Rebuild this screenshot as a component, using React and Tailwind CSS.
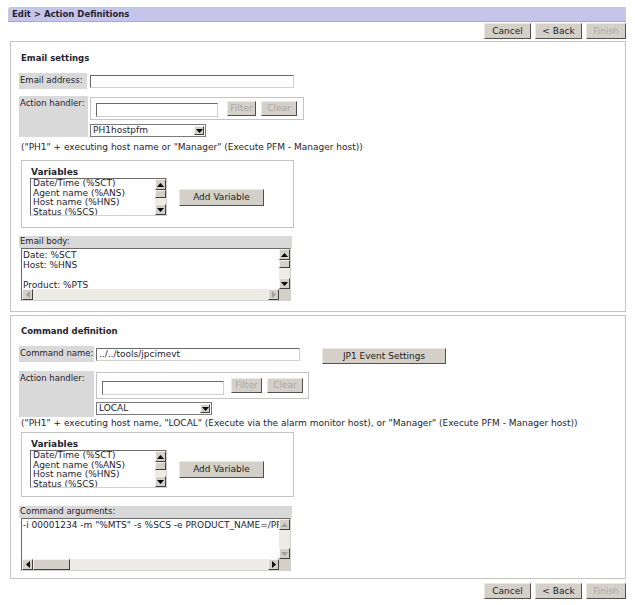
import React from 'react';

const Tri = ({ dir = 'down', color = '#000' }) => {
  const pts = {
    up: '0,4 3.5,0 7,4',
    down: '0,0 7,0 3.5,4',
    left: '4,0 4,7 0,3.5',
    right: '0,0 0,7 4,3.5',
  }[dir];
  const vert = dir === 'up' || dir === 'down';
  return (
    <svg width={vert ? 7 : 4} height={vert ? 4 : 7} viewBox={vert ? '0 0 7 4' : '0 0 4 7'}>
      <polygon points={pts} fill={color} />
    </svg>
  );
};

const SBtn = ({ dir, dim }) => (
  <div className="w-[11px] h-[11px] shrink-0 bg-[#d4d0c8] border border-t-[#f4f4f4] border-l-[#f4f4f4] border-r-[#404040] border-b-[#404040] flex items-center justify-center">
    <Tri dir={dir} color={dim ? '#a0a0a0' : '#000'} />
  </div>
);

const Thumb = ({ className = '' }) => (
  <div className={`bg-[#d4d0c8] border border-t-[#f4f4f4] border-l-[#f4f4f4] border-r-[#404040] border-b-[#404040] ${className}`} />
);

function VScroll({ thumb = true, dim = false }) {
  return (
    <div className="w-[11px] flex flex-col bg-[#ecebe6] shrink-0">
      <SBtn dir="up" dim={dim} />
      {thumb ? <Thumb className="h-[8px] w-[11px]" /> : null}
      <div className="flex-1" />
      <SBtn dir="down" dim={dim} />
    </div>
  );
}

function Btn({ children, className = '', disabled }) {
  return (
    <div
      className={`bg-[#d4d0c8] border border-t-[#ece9e2] border-l-[#ece9e2] border-r-[#505050] border-b-[#505050] flex items-center justify-center leading-none whitespace-nowrap ${disabled ? 'text-[#a8a8a8]' : 'text-[#222]'} ${className}`}
    >
      {children}
    </div>
  );
}

function ButtonRow({ className = '' }) {
  return (
    <div className={`flex justify-end gap-[4px] ${className}`}>
      <Btn className="w-[47px] h-[16px]">Cancel</Btn>
      <Btn className="w-[47px] h-[16px]">&lt; Back</Btn>
      <Btn className="w-[40px] h-[16px]" disabled>Finish</Btn>
    </div>
  );
}

const Label = ({ children, className = '' }) => (
  <div className={`bg-[#d9d9d9] pl-[1px] pt-[2px] text-[8.5px] leading-[11px] shrink-0 whitespace-nowrap ${className}`}>{children}</div>
);

const Input = ({ value = '', className = '' }) => (
  <div className={`bg-white border border-t-[#6a6a6a] border-l-[#6a6a6a] border-r-[#d0d0d0] border-b-[#d0d0d0] leading-[11px] pl-[2px] overflow-hidden whitespace-nowrap ${className}`}>
    {value}
  </div>
);

function Select({ value, className = '' }) {
  return (
    <div className={`bg-white border border-[#7a7a7a] flex items-stretch ${className}`}>
      <div className="flex-1 pl-[2px] leading-[10px]">{value}</div>
      <div className="w-[10px] m-px bg-[#d4d0c8] border border-t-[#f4f4f4] border-l-[#f4f4f4] border-r-[#404040] border-b-[#404040] flex items-center justify-center">
        <Tri dir="down" />
      </div>
    </div>
  );
}

function Handler({ value, labelW, boxW, boxH, inputMl, filterMl, filterW, clearW, selMt, labelH }) {
  return (
    <div className="flex">
      <Label className={`${labelW} ${labelH}`}>Action handler:</Label>
      <div className="ml-[2px]">
        <div className={`mt-[1px] border border-[#c4c4c4] flex items-center ${boxW} ${boxH}`}>
          <Input className={`w-[122px] h-[14px] ${inputMl}`} />
          <Btn className={`h-[15px] ${filterW} ${filterMl}`} disabled>Filter</Btn>
          <Btn className={`h-[15px] ml-[5px] ${clearW}`} disabled>Clear</Btn>
        </div>
        <Select value={value} className={`w-[116px] h-[13px] ${selMt}`} />
      </div>
    </div>
  );
}

function Variables({ className = '' }) {
  return (
    <div className={`w-[273px] border border-[#c4c4c4] pl-[8px] ${className}`}>
      <div className="mt-[6px] ml-[1px] font-bold text-[9px] leading-[11px]">Variables</div>
      <div className="flex items-center">
        <div className="w-[137px] h-[38px] bg-white border border-t-[#6a6a6a] border-l-[#6a6a6a] border-r-[#d0d0d0] border-b-[#d0d0d0] flex">
          <div className="flex-1 pl-[2px] leading-[9.5px] overflow-hidden whitespace-nowrap">
            <div>Date/Time (%SCT)</div>
            <div>Agent name (%ANS)</div>
            <div>Host name (%HNS)</div>
            <div>Status (%SCS)</div>
          </div>
          <VScroll />
        </div>
        <Btn className="ml-[12px] w-[85px] h-[17px]">Add Variable</Btn>
      </div>
    </div>
  );
}

function TextArea({ lines, className = '', vThumb = true, vDim = false, hThumb = false }) {
  return (
    <div className={`w-[270px] bg-white border border-t-[#6a6a6a] border-l-[#6a6a6a] border-r-[#d0d0d0] border-b-[#d0d0d0] flex flex-col ${className}`}>
      <div className="flex flex-1 min-h-0">
        <div className="flex-1 min-w-0 pl-[1px] pt-[1px] leading-[10px] overflow-hidden whitespace-pre">
          {lines.map((l, i) => (
            <div key={i} className="h-[10px]">{l}</div>
          ))}
        </div>
        <VScroll thumb={vThumb} dim={vDim} />
      </div>
      <div className="flex h-[11px] bg-[#ecebe6]">
        <SBtn dir="left" dim={!hThumb} />
        {hThumb ? <Thumb className="w-[37px] h-[11px]" /> : null}
        <div className="flex-1" />
        <SBtn dir="right" dim={!hThumb} />
        <div className="w-[11px] bg-[#d4d0c8]" />
      </div>
    </div>
  );
}

export default function App() {
  return (
    <div className="w-[635px] h-[605px] bg-white text-[9px] text-[#262330] font-['DejaVu_Sans',Verdana,sans-serif] overflow-hidden">
      <div className="pt-[7px] pl-[8px] pr-[9px]">
        <div className="h-[15px] bg-[#c5c5ea] border-b border-[#a8a8d0] rounded-tl-[3px] pl-[4px] font-bold text-[8.5px] leading-[14px]">
          Edit &gt; Action Definitions
        </div>
        <ButtonRow className="mt-[1px]" />
      </div>

      <div className="ml-[10px] w-[616px] mt-[2px]">
        {/* Email settings */}
        <div className="h-[271px] border border-[#c4c4c4] pl-[8px]">
          <div className="mt-[11px] ml-[2px] font-bold text-[8.5px] leading-[11px]">Email settings</div>
          <div className="mt-[9px] flex">
            <Label className="w-[68px] h-[16px]">Email address:</Label>
            <Input className="ml-[3px] mt-[2px] w-[204px] h-[13px]" />
          </div>
          <div className="mt-[7px]">
            <Handler
              value="PH1hostpfm"
              labelW="w-[69px]"
              labelH="h-[41px]"
              boxW="w-[214px]"
              boxH="h-[23px]"
              inputMl="ml-[5px] mt-[2px]"
              filterMl="ml-[9px]"
              filterW="w-[29px]"
              clearW="w-[36px]"
              selMt="mt-[4px]"
            />
          </div>
          <div className="mt-[5px] ml-[2px] leading-[11px] whitespace-nowrap">("PH1" + executing host name or "Manager" (Execute PFM - Manager host))</div>
          <Variables className="mt-[7px] ml-[2px] h-[68px]" />
          <Label className="mt-[8px] w-[273px] h-[12px] !pt-0">Email body:</Label>
          <TextArea className="ml-[2px] h-[53px]" lines={['Date: %SCT', 'Host: %HNS', '', 'Product: %PTS']} />
        </div>

        {/* Command definition */}
        <div className="mt-[3px] h-[264px] border border-[#c4c4c4] pl-[8px]">
          <div className="mt-[10px] ml-[2px] font-bold text-[8.5px] leading-[11px]">Command definition</div>
          <div className="mt-[9px] flex">
            <Label className="w-[75px] h-[16px]">Command name:</Label>
            <Input className="ml-[2px] mt-[2px] w-[204px] h-[13px]" value="../../tools/jpcimevt" />
            <Btn className="ml-[22px] mt-[2px] w-[124px] h-[16px]">JP1 Event Settings</Btn>
          </div>
          <div className="mt-[7px]">
            <Handler
              value="LOCAL"
              labelW="w-[75px]"
              labelH="h-[46px]"
              boxW="w-[213px]"
              boxH="h-[27px]"
              inputMl="ml-[5px] mt-[4px]"
              filterMl="ml-[7px]"
              filterW="w-[31px]"
              clearW="w-[36px]"
              selMt="mt-[3px]"
            />
          </div>
          <div className="mt-[1px] ml-[2px] leading-[11px] whitespace-nowrap">("PH1" + executing host name, "LOCAL" (Execute via the alarm monitor host), or "Manager" (Execute PFM - Manager host))</div>
          <Variables className="mt-[3px] ml-[2px] h-[65px]" />
          <Label className="mt-[9px] w-[273px] h-[12px] !pt-0">Command arguments:</Label>
          <TextArea
            className="ml-[2px] h-[53px]"
            lines={['-i 00001234 -m "%MTS" -s %SCS -e PRODUCT_NAME=/PFM/']}
            vThumb={false}
            vDim
            hThumb
          />
        </div>
      </div>

      <div className="pr-[9px] mt-[4px]">
        <ButtonRow />
      </div>
    </div>
  );
}
